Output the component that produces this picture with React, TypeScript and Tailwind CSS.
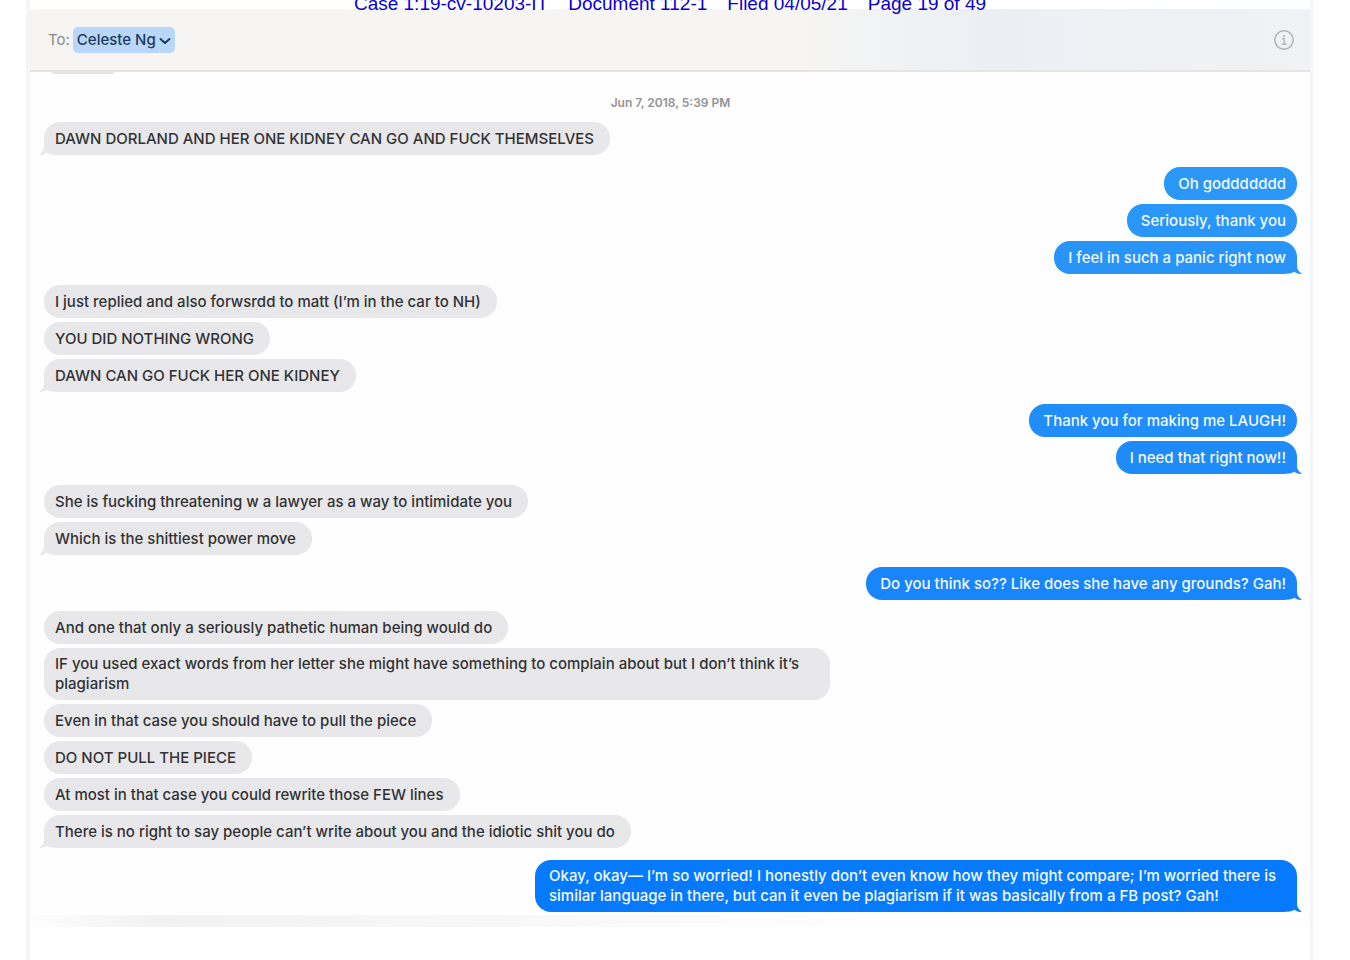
type Message = { text: string; color?: string };
type Group = { from: "them" | "me"; messages: Message[] };

const groups: Group[] = [
  {
    from: "them",
    messages: [{ text: "DAWN DORLAND AND HER ONE KIDNEY CAN GO AND FUCK THEMSELVES" }],
  },
  {
    from: "me",
    messages: [
      { text: "Oh goddddddd", color: "bg-[#2b98f8] text-[#2b98f8]" },
      { text: "Seriously, thank you", color: "bg-[#2a96f8] text-[#2a96f8]" },
      { text: "I feel in such a panic right now", color: "bg-[#2894f8] text-[#2894f8]" },
    ],
  },
  {
    from: "them",
    messages: [
      { text: "I just replied and also forwsrdd to matt (I’m in the car to NH)" },
      { text: "YOU DID NOTHING WRONG" },
      { text: "DAWN CAN GO FUCK HER ONE KIDNEY" },
    ],
  },
  {
    from: "me",
    messages: [
      { text: "Thank you for making me LAUGH!", color: "bg-[#208df9] text-[#208df9]" },
      { text: "I need that right now!!", color: "bg-[#1e8bf9] text-[#1e8bf9]" },
    ],
  },
  {
    from: "them",
    messages: [
      { text: "She is fucking threatening w a lawyer as a way to intimidate you" },
      { text: "Which is the shittiest power move" },
    ],
  },
  {
    from: "me",
    messages: [
      {
        text: "Do you think so?? Like does she have any grounds? Gah!",
        color: "bg-[#1885fa] text-[#1885fa]",
      },
    ],
  },
  {
    from: "them",
    messages: [
      { text: "And one that only a seriously pathetic human being would do" },
      {
        text: "IF you used exact words from her letter she might have something to complain about but I don’t think it’s plagiarism",
      },
      { text: "Even in that case you should have to pull the piece" },
      { text: "DO NOT PULL THE PIECE" },
      { text: "At most in that case you could rewrite those FEW lines" },
      { text: "There is no right to say people can’t write about you and the idiotic shit you do" },
    ],
  },
  {
    from: "me",
    messages: [
      {
        text: "Okay, okay— I’m so worried! I honestly don’t even know how they might compare; I’m worried there is similar language in there, but can it even be plagiarism if it was basically from a FB post? Gah!",
        color: "bg-[#067afd] text-[#067afd]",
      },
    ],
  },
];

function Tail({ side }: { side: "left" | "right" }) {
  return (
    <svg
      viewBox="0 0 20 16"
      className={
        side === "right"
          ? "absolute -right-[5px] bottom-0 h-4 w-5"
          : "absolute bottom-0 -left-[5px] h-4 w-5 -scale-x-100"
      }
      fill="currentColor"
      aria-hidden="true"
    >
      <path d="M0 0H15V8C15 11.500 17 14 20 15.800C17.500 16.200 14.500 15.600 12.500 13.800C10 15.200 6 16 0 16Z" />
    </svg>
  );
}

function Bubble({ message, from, last }: { message: Message; from: Group["from"]; last: boolean }) {
  const mine = from === "me";
  return (
    <li
      className={
        mine
          ? `relative flex min-h-[33px] max-w-[762px] items-center rounded-2xl py-1.5 pr-[11px] pl-3.5 ${message.color}`
          : "relative flex min-h-[33px] max-w-[786px] items-center rounded-2xl bg-[#e8e8eb] py-1.5 pr-4 pl-[11px] text-[#e8e8eb]"
      }
    >
      {last && <Tail side={mine ? "right" : "left"} />}
      <span className={mine ? "relative text-[#f2f9ff]" : "relative text-[#323234]"}>
        {message.text}
      </span>
    </li>
  );
}

export default function App() {
  return (
    <div className="flex min-h-screen flex-col bg-white font-['Inter',sans-serif]">
      <div className="mr-[37px] ml-[26px] flex grow flex-col border-r-[3px] border-l-4 border-[#f4f5fb]">
        {/* Court filing stamp, running onto the top of the window */}
        <div className="relative z-10 -mt-1.5 flex h-[15px] justify-center gap-5 font-['Liberation_Sans',sans-serif] text-[19px] leading-5 text-[#0a00d2]">
          <span>Case 1:19-cv-10203-IT</span>
          <span>Document 112-1</span>
          <span>Filed 04/05/21</span>
          <span>Page 19 of 49</span>
        </div>

        <header className="flex h-[63px] items-center justify-between border-b-2 border-[#e6e5e4] bg-linear-to-r from-[#f6f5f3] from-60% via-[#ebeff4] via-75% to-[#f1f2f3] pr-4 pl-[18px]">
          <div className="flex items-center gap-[3px] text-[15px]">
            <span className="pt-0.5 text-[#8b8a8a]">To:</span>
            <button className="flex h-[26px] items-center gap-[3px] rounded-[5px] bg-[#b9d7fb] px-1 pt-0.5 font-medium text-[#1d3a5c]">
              Celeste Ng
              <svg viewBox="0 0 12 8" className="h-2 w-3" fill="none" stroke="currentColor" aria-hidden="true">
                <path d="M1.500 2L6 6L10.500 2" strokeWidth="2" strokeLinecap="round" strokeLinejoin="round" />
              </svg>
            </button>
          </div>
          <button aria-label="Details" className="text-[#b0b1b4]">
            <svg viewBox="0 0 20 20" className="size-5" fill="none" stroke="currentColor">
              <circle cx="10" cy="10" r="9.200" strokeWidth="1.500" />
              <path d="M8 8.500H10.300V14M7.500 14.300H12.800" strokeWidth="1.300" />
              <circle cx="10" cy="5.800" r="1" fill="currentColor" stroke="none" />
            </svg>
          </button>
        </header>

        <main className="flex flex-col bg-[#fefefe] pr-[13px] pl-3.5">
          {/* Bottom edge of the message scrolled under the header */}
          <div className="ml-2 h-0.5 w-[62px] rounded-b-full bg-[#e3e3e5]" />
          <time className="mt-[21px] text-center text-xs leading-4 font-semibold text-[#929294]">
            Jun 7, 2018, 5:39 PM
          </time>

          <div className="flex flex-col text-[15px] leading-5 font-medium">
            {groups.map((group, i) => (
              <ul
                key={i}
                className={
                  group.from === "me"
                    ? "mt-3 flex flex-col items-end gap-1"
                    : "mt-[11px] flex flex-col items-start gap-1"
                }
              >
                {group.messages.map((message, j) => (
                  <Bubble
                    key={message.text}
                    message={message}
                    from={group.from}
                    last={j === group.messages.length - 1}
                  />
                ))}
              </ul>
            ))}
          </div>
        </main>
        <div className="mt-[3px] h-3 bg-linear-to-r from-[#fdfdfd] via-[#f2f2f3] via-10% to-[#fefefe] to-65%" />
      </div>
    </div>
  );
}
